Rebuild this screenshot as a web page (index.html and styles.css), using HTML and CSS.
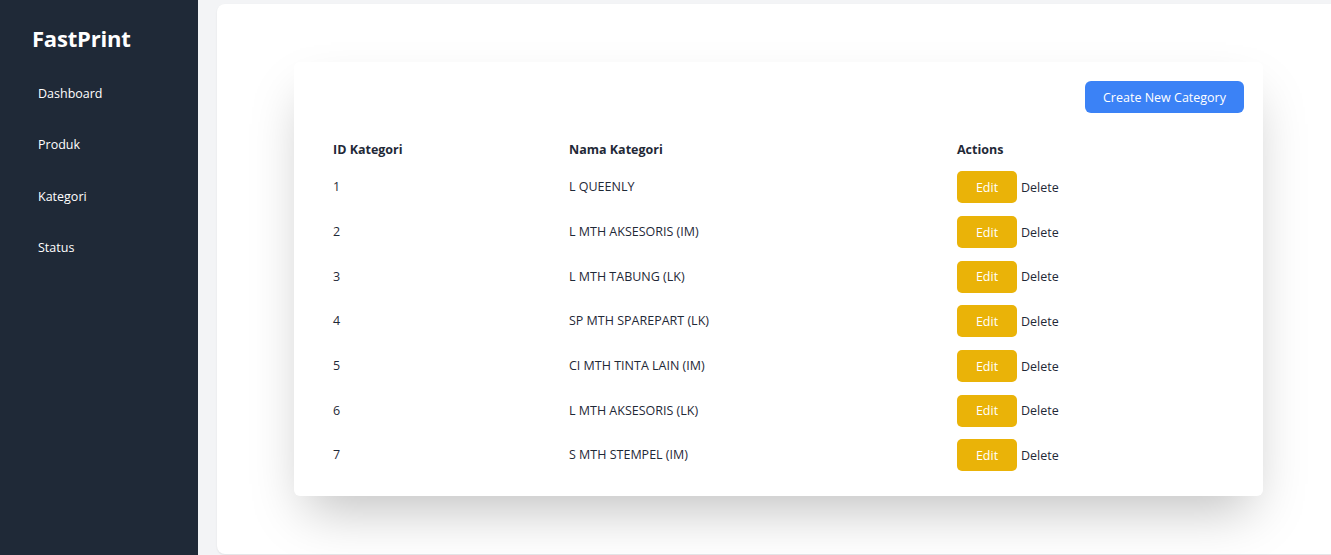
FILE: index.html
```html
<!DOCTYPE html>
<html>
<head>
<meta charset="utf-8">
<link rel="stylesheet" href="styles.css">
</head>
<body>
<div class="layout">
  <aside class="sidebar">
    <div class="brand">FastPrint</div>
    <nav class="nav">
      <a class="nav-item">Dashboard</a>
      <a class="nav-item">Produk</a>
      <a class="nav-item">Kategori</a>
      <a class="nav-item">Status</a>
    </nav>
  </aside>
  <main class="main">
    <section class="panel">
      <div class="card">
        <div class="card-top">
          <button class="btn-create">Create New Category</button>
        </div>
        <table class="table">
          <thead>
            <tr><th class="c-id">ID Kategori</th><th class="c-name">Nama Kategori</th><th class="c-act">Actions</th></tr>
          </thead>
          <tbody>
            <tr><td>1</td><td>L QUEENLY</td><td><button class="btn-edit">Edit</button><button class="btn-del">Delete</button></td></tr>
            <tr><td>2</td><td>L MTH AKSESORIS (IM)</td><td><button class="btn-edit">Edit</button><button class="btn-del">Delete</button></td></tr>
            <tr><td>3</td><td>L MTH TABUNG (LK)</td><td><button class="btn-edit">Edit</button><button class="btn-del">Delete</button></td></tr>
            <tr><td>4</td><td>SP MTH SPAREPART (LK)</td><td><button class="btn-edit">Edit</button><button class="btn-del">Delete</button></td></tr>
            <tr><td>5</td><td>CI MTH TINTA LAIN (IM)</td><td><button class="btn-edit">Edit</button><button class="btn-del">Delete</button></td></tr>
            <tr><td>6</td><td>L MTH AKSESORIS (LK)</td><td><button class="btn-edit">Edit</button><button class="btn-del">Delete</button></td></tr>
            <tr><td>7</td><td>S MTH STEMPEL (IM)</td><td><button class="btn-edit">Edit</button><button class="btn-del">Delete</button></td></tr>
          </tbody>
        </table>
      </div>
    </section>
  </main>
</div>
</body>
</html>
```
FILE: styles.css
```css
* { box-sizing: border-box; }
html, body { margin: 0; padding: 0; height: 100%; overflow: hidden; }
body {
  font-family: "Open Sans", "Noto Sans", sans-serif;
  font-size: 12.5px;
  color: #1f2937;
  background: #f3f4f6;
}
.layout { display: flex; height: 555px; }
.sidebar {
  width: 198px;
  flex: none;
  background: #1f2937;
  color: #fff;
  padding: 23px 0 0 32px;
}
.brand {
  font-size: 22px;
  font-weight: 700;
  line-height: 30px;
  letter-spacing: -0.2px;
}
.nav { display: flex; flex-direction: column; margin-top: 31px; padding-left: 6px; }
.nav-item {
  display: block;
  font-size: 12.5px;
  line-height: 20px;
  height: 51.3px;
  color: #fff;
}
.main { flex: 1; padding: 4px 0 1px 19px; display: flex; min-width: 0; }
.panel {
  flex: 1;
  margin-right: -20px;
  background: #fff;
  border-radius: 8px;
  box-shadow: 0 1px 2px rgba(0,0,0,0.08);
  padding: 58px 0 0 77px;
}
.card {
  width: 969px;
  background: #fff;
  border-radius: 6px;
  padding: 19px 19px 18px 20px;
  box-shadow: 0 25px 50px -12px rgba(0,0,0,0.25);
}
.card-top { display: flex; justify-content: flex-end; margin-bottom: 21px; }
.btn-create {
  font-family: inherit;
  font-size: 12.5px;
  color: #fff;
  background: #3b82f6;
  border: none;
  border-radius: 6px;
  width: 159px;
  height: 32px;
  padding: 0;
  cursor: pointer;
}
.table { width: 100%; border-collapse: collapse; }
th, td { text-align: left; padding: 0 0 0 19px; }
th { font-weight: 700; height: 31px; line-height: 20px; }
td { height: 44.7px; line-height: 20px; }
.c-id { width: 236px; }
.c-name { width: 388px; }
.btn-edit {
  font-family: inherit;
  font-size: 12.5px;
  color: #fff;
  background: #eab308;
  border: none;
  border-radius: 5px;
  width: 60px;
  height: 32px;
  padding: 0;
  vertical-align: middle;
}
.btn-del {
  font-family: inherit;
  font-size: 12.5px;
  color: #1f2937;
  background: none;
  border: none;
  padding: 0 0 0 4px;
  vertical-align: middle;
}
```
